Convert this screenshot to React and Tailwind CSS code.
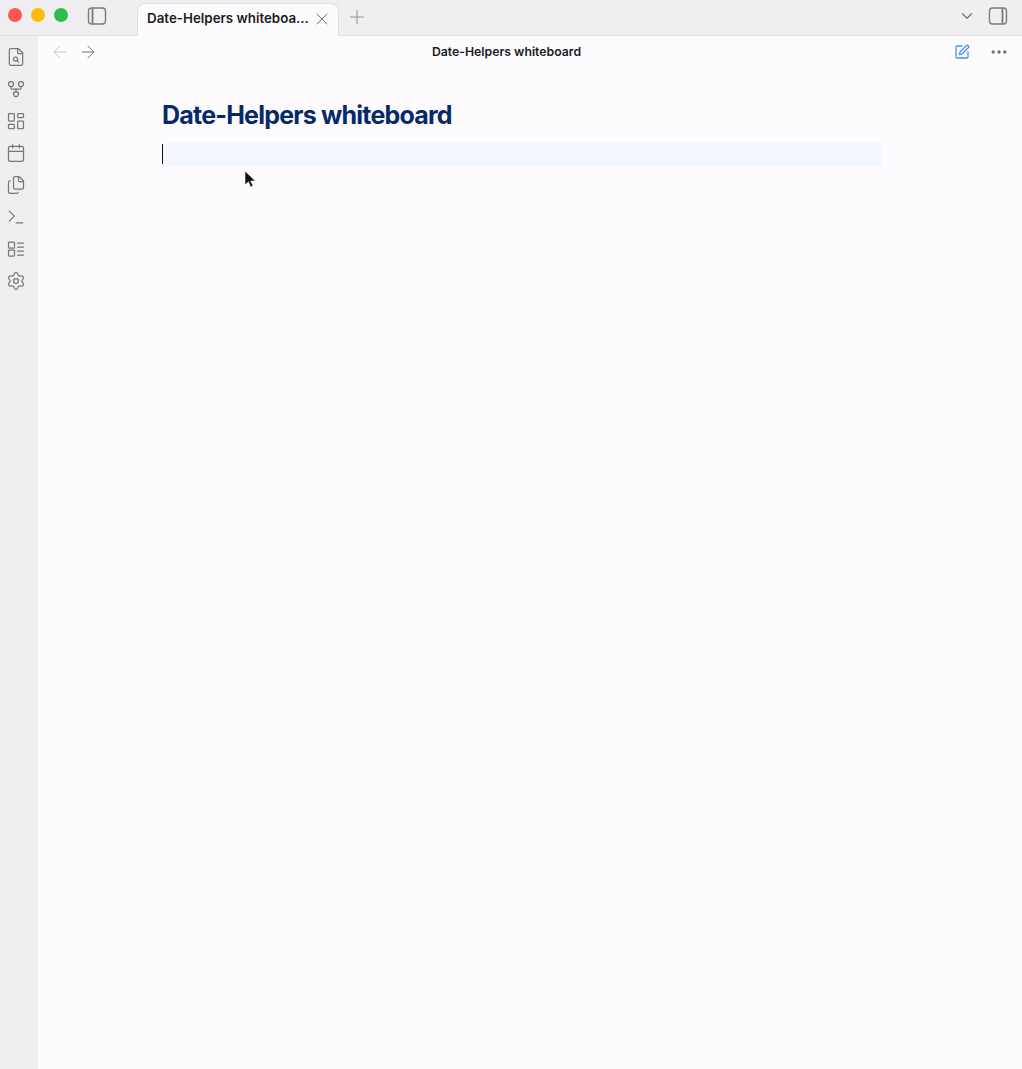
import React from "react";
import {
  ArrowLeft,
  ArrowRight,
  Calendar,
  ChevronDown,
  Ellipsis,
  FileSearch,
  Files,
  GitFork,
  LayoutDashboard,
  Plus,
  Settings,
  SquarePen,
  Terminal,
  X,
} from "lucide-react";

// checkbox rows, lucide has no plain version of this one
const TaskIcon = ({ className }) => (
  <svg width="20" height="20" viewBox="0 0 20 20" fill="none" stroke="currentColor" strokeWidth="1.25" strokeLinecap="round" className={className}>
    <rect x="2.5" y="3" width="6" height="6" rx="0.8" />
    <rect x="2.5" y="11" width="6" height="6" rx="0.8" />
    <path d="M11.5 4h6M11.5 8h6M11.5 12h6M11.5 16h6" />
  </svg>
);

const PaneIcon = ({ side, className }) => (
  <svg width="20" height="18" viewBox="0 0 20 18" fill="none" stroke="currentColor" strokeWidth="1.4" className={className}>
    <rect x="1.5" y="1" width="17" height="16" rx="3" />
    <path d={side === "left" ? "M5.5 1v16" : "M14.5 1v16"} strokeWidth="1.8" />
  </svg>
);

const sidebarIcons = [FileSearch, GitFork, LayoutDashboard, Calendar, Files, Terminal, TaskIcon, Settings];

const TitleBar = () => (
  <div className="flex h-9 shrink-0 border-b border-[#e0dfe2] bg-[#efeef0]">
    <div className="flex w-[137px] shrink-0 items-center pb-[5px] pl-2">
      <span className="h-3.5 w-3.5 rounded-full bg-[#fc5753]" />
      <span className="ml-[9px] h-3.5 w-3.5 rounded-full bg-[#fdbc09]" />
      <span className="ml-[9px] h-3.5 w-3.5 rounded-full bg-[#2ebd4c]" />
      <PaneIcon side="left" className="ml-[19px] mt-[2px] text-[#7d7d80]" />
    </div>
    <div className="relative z-10 mt-[3px] flex h-[33px] w-[202px] items-center justify-between rounded-t-lg border border-b-0 border-[#e0dfe2] bg-[#fdfbfe] pb-[3px] pl-[9px] pr-[6px]">
      <span className="whitespace-nowrap text-[13.35px] font-semibold text-[#1c1c1e]">
        Date-Helpers whiteboa...
      </span>
      <X size={20} strokeWidth={1.2} className="shrink-0 text-[#6f6f72]" />
    </div>
    <Plus size={22} strokeWidth={1.2} className="ml-[7px] mt-[6px] text-[#98989b]" />
    <div className="ml-auto flex items-center pb-[3px] pr-[14px]">
      <ChevronDown size={18} strokeWidth={1.5} className="text-[#6f6f72]" />
      <PaneIcon side="right" className="ml-[12px] text-[#7d7d80]" />
    </div>
  </div>
);

const Sidebar = () => (
  <div className="flex w-[38px] shrink-0 flex-col items-center gap-3 bg-[#efeef0] pr-1.5 pt-[11px]">
    {sidebarIcons.map((Icon, i) => (
      <Icon key={i} size={20} strokeWidth={1.5} className="text-[#77777a]" />
    ))}
  </div>
);

const NavBar = () => (
  <div className="flex h-8 items-center pl-3 pr-[13px]">
    <ArrowLeft size={20} strokeWidth={1.2} className="text-[#c6c6c9]" />
    <ArrowRight size={20} strokeWidth={1.2} className="ml-2 text-[#727275]" />
    <span className="flex-1 pr-[39px] text-center text-[12.25px] font-semibold text-[#1c1c1e]">
      Date-Helpers whiteboard
    </span>
    <SquarePen size={16} strokeWidth={1.9} className="text-[#4a90e2]" />
    <Ellipsis size={20} strokeWidth={2} className="ml-[19px] text-[#727275]" />
  </div>
);

const Cursor = () => (
  <svg width="12" height="20" viewBox="0 0 12 20" className="absolute left-[82px] top-[27px]">
    <path d="M1 1v14l3.4-3.2 2.2 5.2 2.4-1-2.2-5h4.6z" fill="#111" stroke="#fff" strokeWidth="0.6" />
  </svg>
);

export default function App() {
  return (
    <div className="flex h-[1069px] w-[1022px] flex-col overflow-hidden bg-[#fdfbfe] font-['Inter',sans-serif]">
      <TitleBar />
      <div className="flex min-h-0 flex-1">
        <Sidebar />
        <div className="min-w-0 flex-1">
          <NavBar />
          <div className="ml-[124px] mr-[140px] pt-[29px]">
            <h1 className="text-[25px] font-bold leading-[36px] tracking-[-0.78px] text-[#062a68]">
              Date-Helpers whiteboard
            </h1>
            <div className="relative mt-[10px] h-6 bg-[#f4f6fe]">
              <div className="absolute left-0 top-px h-5 w-px bg-[#111]" />
              <Cursor />
            </div>
          </div>
        </div>
      </div>
    </div>
  );
}
